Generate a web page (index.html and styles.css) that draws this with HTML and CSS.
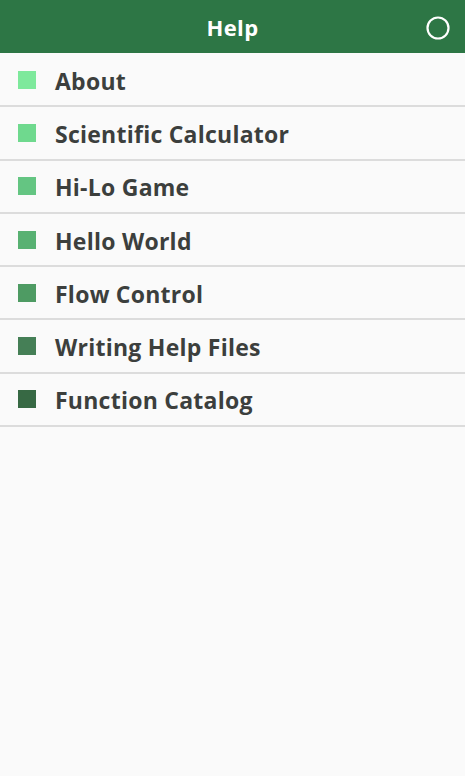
FILE: index.html
```html
<!DOCTYPE html>
<html>
<head>
<meta charset="utf-8">
<link rel="stylesheet" href="styles.css">
</head>
<body>
<header class="bar">
  <h1 class="title">Help</h1>
  <svg class="ring" width="26" height="26" viewBox="0 0 26 26"><circle cx="13" cy="13" r="10.5" fill="none" stroke="#fff" stroke-width="2.2"/></svg>
</header>
<ul class="list">
  <li class="item"><span class="sq c1"></span><span class="label">About</span></li>
  <li class="item"><span class="sq c2"></span><span class="label">Scientific Calculator</span></li>
  <li class="item"><span class="sq c3"></span><span class="label">Hi-Lo Game</span></li>
  <li class="item"><span class="sq c4"></span><span class="label">Hello World</span></li>
  <li class="item"><span class="sq c5"></span><span class="label">Flow Control</span></li>
  <li class="item"><span class="sq c6"></span><span class="label">Writing Help Files</span></li>
  <li class="item"><span class="sq c7"></span><span class="label">Function Catalog</span></li>
</ul>
</body>
</html>
```
FILE: styles.css
```css
html, body {
  margin: 0;
  padding: 0;
  background: #fafafa;
  font-family: "Open Sans", "DejaVu Sans", sans-serif;
}
.bar {
  position: relative;
  height: 53px;
  background: #2d7645;
  display: flex;
  align-items: center;
  justify-content: center;
}
.title {
  margin: 0;
  color: #fff;
  font-size: 22px;
  font-weight: 700;
  line-height: 1;
  letter-spacing: 0.4px;
}
.ring {
  position: absolute;
  right: 14px;
  top: 15px;
}
.list {
  list-style: none;
  margin: 0;
  padding: 0;
}
.item {
  height: 51.3px;
  border-bottom: 2px solid #dcdcdc;
  display: flex;
  align-items: center;
  box-sizing: content-box;
}
.item:first-child {
  padding-top: 1px;
}
.sq {
  width: 18px;
  height: 18px;
  margin-left: 18px;
  margin-right: 19px;
  flex: none;
}
.label {
  font-size: 23px;
  font-weight: 700;
  letter-spacing: 0.25px;
  color: #3c3f3d;
  padding-top: 2px;
}
.c1 { background: #7ee99c; }
.c2 { background: #6fd98e; }
.c3 { background: #64c582; }
.c4 { background: #58b172; }
.c5 { background: #4e9b63; }
.c6 { background: #457f56; }
.c7 { background: #376944; }
```
